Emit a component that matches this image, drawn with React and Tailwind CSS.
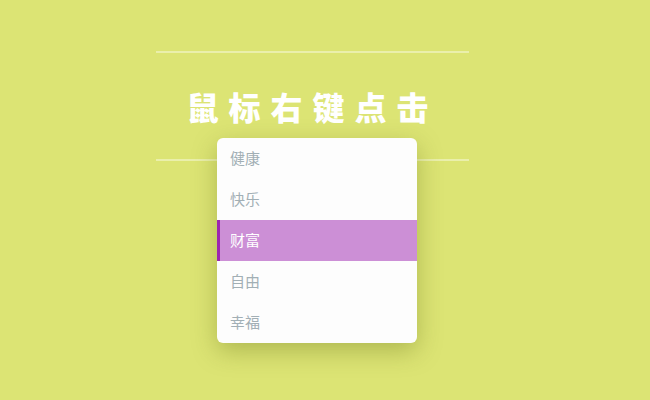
import React from 'react';

const items = ['健康', '快乐', '财富', '自由', '幸福'];

const App = () => {
  return (
    <div
      className="relative h-[400px] w-[650px] overflow-hidden bg-[#dce474]"
      style={{ fontFamily: '"Noto Sans CJK SC", "Noto Sans", sans-serif' }}
    >
      <div className="pl-[156px] pt-[51px]">
        <div className="w-[313px] border-y-2 border-white/40">
          <h1 className="flex h-[106px] items-center justify-center text-[32px] font-black tracking-[10px] text-white">
            鼠标右键点击
          </h1>
        </div>
      </div>

      {/* context menu */}
      <ul className="absolute left-[217px] top-[138px] w-[200px] overflow-hidden rounded-md bg-[#fdfdfd] shadow-[0_8px_24px_rgba(120,130,40,0.45)]">
        {items.map((label) => {
          const active = label === '财富';
          return (
            <li
              key={label}
              className={
                active
                  ? 'flex h-[41px] items-center border-l-[3px] border-[#9c27b0] bg-[#cc8fd6] pl-[10px] text-[15px] text-white'
                  : 'flex h-[41px] items-center pl-[13px] text-[15px] text-[#a2afb5]'
              }
            >
              {label}
            </li>
          );
        })}
      </ul>
    </div>
  );
};

export default App;
